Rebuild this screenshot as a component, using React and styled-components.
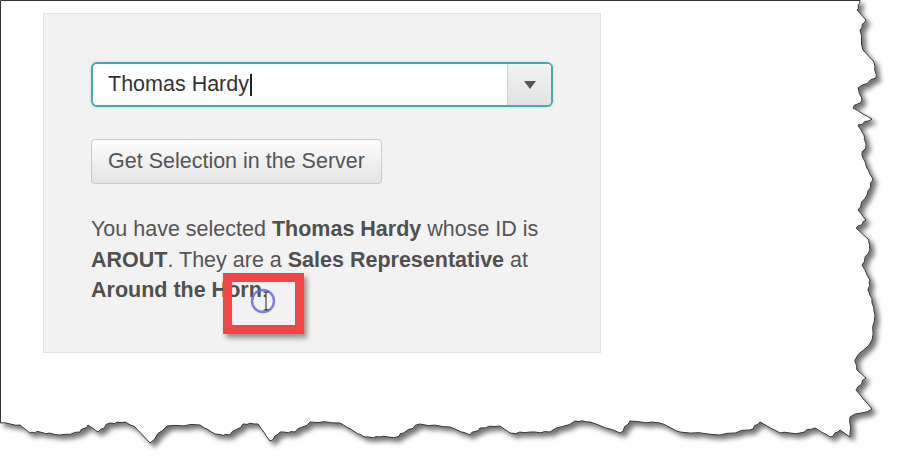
import React from 'react';
import styled, { createGlobalStyle } from 'styled-components';

const rightEdge = [
  [860, 0.5], [857, 10], [866, 20], [860, 30], [863, 50], [874, 62], [876, 78],
  [858, 88], [862, 100], [853, 108], [872, 119], [858, 125], [864, 135], [866, 145],
  [862, 155], [867, 168], [873, 180], [867, 195], [858, 210], [866, 220], [856, 228],
  [869, 240], [870, 250], [862, 265], [870, 280], [868, 290], [872, 300], [875, 315],
  [872, 340], [855, 360], [857, 370], [866, 378], [856, 390], [872, 409], [850, 417],
  [850, 437],
];

const bottomEdge = [
  [840, 430], [830, 437], [815, 428], [800, 433], [780, 433], [760, 422], [750, 430],
  [720, 435], [680, 432], [660, 423], [630, 421], [620, 433], [590, 422], [575, 421],
  [550, 432], [530, 432], [510, 433], [500, 426], [480, 428], [470, 435], [450, 427],
  [420, 424], [405, 432], [397, 437], [380, 437], [365, 437], [355, 432], [340, 423],
  [310, 422], [295, 432], [280, 432], [270, 441], [258, 424], [243, 424], [230, 435],
  [215, 434], [200, 425], [167, 426], [150, 443], [135, 427], [125, 422], [110, 423],
  [98, 432], [88, 425], [80, 432], [60, 435], [40, 432], [30, 433], [20, 425], [0.5, 423],
];

// add a bit of fine jitter so the edge looks torn rather than polygonal
const roughen = (pts) => {
  const out = [];
  for (let i = 0; i < pts.length - 1; i++) {
    const [x1, y1] = pts[i];
    const [x2, y2] = pts[i + 1];
    out.push([x1, y1]);
    for (let s = 1; s < 4; s++) {
      const t = s / 4;
      const j = ((i * 7 + s * 13) % 5) - 2;
      out.push([x1 + (x2 - x1) * t + j * 0.4, y1 + (y2 - y1) * t + j * 0.4]);
    }
  }
  out.push(pts[pts.length - 1]);
  return out;
};

const paperPath =
  'M0.5,0.5 ' +
  roughen(rightEdge).concat(roughen(bottomEdge)).map(([x, y]) => `L${x.toFixed(1)},${y.toFixed(1)}`).join(' ') +
  ' Z';

const App = () => {
  return (
    <>
      <GlobalStyle />
      <Sheet>
        <TornPaper width="897" height="465" viewBox="0 0 897 465">
          <defs>
            <filter id="paperShadow" x="-5%" y="-5%" width="115%" height="115%">
              <feDropShadow dx="4" dy="4" stdDeviation="2.5" floodColor="#000" floodOpacity="0.55" />
            </filter>
          </defs>
          <path d={paperPath} fill="#fff" stroke="#333" strokeWidth="1" filter="url(#paperShadow)" />
        </TornPaper>

        <Content>
          <Panel>
            <Select>
              <SelectValue>
                Thomas Hardy<Caret />
              </SelectValue>
              <SelectArrow>
                <svg width="12" height="8" viewBox="0 0 12 8">
                  <path d="M0 0 L12 0 L6 8 Z" fill="#555" />
                </svg>
              </SelectArrow>
            </Select>

            <ServerButton type="button">Get Selection in the Server</ServerButton>

            <Message>
              You have selected <b>Thomas Hardy</b> whose ID is <b>AROUT</b>. They are a{' '}
              <b>Sales Representative</b> at <b>Around the Horn</b>.
            </Message>

            <Highlight>
              <svg width="63" height="42" viewBox="0 0 63 42">
                <circle cx="31" cy="19" r="11" fill="none" stroke="#6262dc" strokeOpacity="0.8" strokeWidth="2.5" />
                <path d="M34 10.5 V27.5 M31.5 10 H33 Q34 10 34 11 Q34 10 35 10 H36.5 M31.5 28 H33 Q34 28 34 27 Q34 28 35 28 H36.5" stroke="#222" strokeWidth="1" fill="none" />
              </svg>
            </Highlight>
          </Panel>
        </Content>
      </Sheet>
    </>
  );
};

export default App;

// Styled components

const GlobalStyle = createGlobalStyle`
  body {
    margin: 0;
    background: #fff;
    font-family: "Liberation Sans", Arial, sans-serif;
  }
`;

const Sheet = styled.div`
  position: relative;
  width: 897px;
  height: 465px;
  overflow: hidden;
  background: #fff;
`;

const TornPaper = styled.svg`
  position: absolute;
  top: 0;
  left: 0;
`;

const Content = styled.div`
  position: relative;
  padding: 13px 0 0 43px;
`;

const Panel = styled.div`
  position: relative;
  box-sizing: border-box;
  width: 558px;
  height: 340px;
  padding: 48px 47px 0 47px;
  background: #f2f2f2;
  border: 1px solid #e2e2e2;
`;

const Select = styled.div`
  display: flex;
  box-sizing: border-box;
  width: 462px;
  height: 45px;
  background: #fff;
  border: 2px solid #4aa5ad;
  border-radius: 6px;
  box-shadow: 0 0 3px rgba(74, 165, 173, 0.35);
  overflow: hidden;
`;

const SelectValue = styled.div`
  flex: 1;
  display: flex;
  align-items: center;
  padding-left: 15px;
  font-size: 21.5px;
  color: #333;
`;

const Caret = styled.span`
  display: inline-block;
  width: 2px;
  height: 22px;
  margin-left: 1px;
  background: #222;
`;

const SelectArrow = styled.div`
  width: 43px;
  display: flex;
  align-items: center;
  justify-content: center;
  border-left: 1px solid #d0d0d0;
  background: linear-gradient(#f2f2f2, #e3e3e3);
`;

const ServerButton = styled.button`
  display: block;
  box-sizing: border-box;
  margin-top: 32px;
  width: 291px;
  height: 45px;
  padding: 0 16px;
  font-family: "Liberation Sans", Arial, sans-serif;
  font-size: 21.5px;
  color: #555;
  background: linear-gradient(#fdfdfd, #e4e4e4);
  border: 1px solid #c9c9c9;
  border-radius: 4px;
  text-align: left;
  white-space: nowrap;
  cursor: pointer;
`;

const Message = styled.p`
  margin: 30px 0 0;
  width: 462px;
  font-size: 21.5px;
  line-height: 30.5px;
  color: #555;

  b {
    font-weight: bold;
    color: #505050;
  }
`;

const Highlight = styled.div`
  position: absolute;
  left: 179px;
  top: 259px;
  box-sizing: border-box;
  width: 81px;
  height: 61px;
  border: 9px solid #f24646;
  box-shadow: 3px 4px 5px rgba(0, 0, 0, 0.4);
`;
